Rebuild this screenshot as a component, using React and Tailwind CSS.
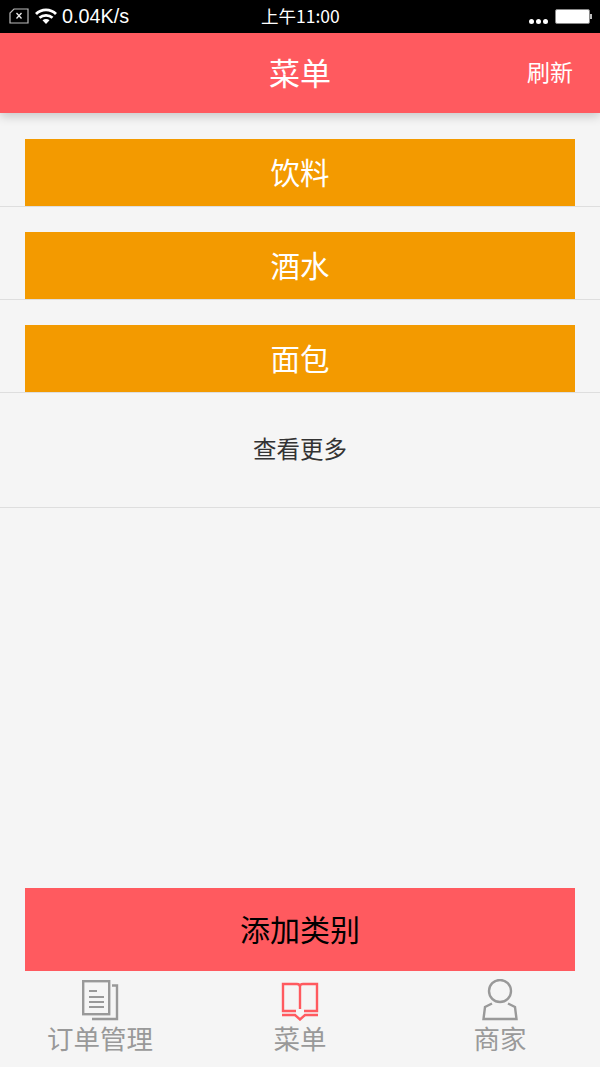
import React from 'react';

const CJK = '[font-family:"Noto_Sans_CJK_SC","Liberation_Sans",sans-serif]';

const categories = ['饮料', '酒水', '面包'];

const OrdersIcon = () => (
  <svg width="38" height="42" viewBox="0 0 38 42" fill="none" stroke="#999" strokeWidth="2.400">
    <rect x="2.200" y="2.200" width="26" height="33" />
    <path d="M31 6.500h5v33.500H11" />
    <path d="M8 12h8M8 18h15M8 23h15M8 28h15" strokeWidth="2" />
  </svg>
);

const MenuIcon = () => (
  <svg width="38" height="39" viewBox="0 0 38 39" fill="none" stroke="#ff5a5f" strokeWidth="2.400">
    <path d="M15 29H2V2h14c2 0 3 1 3 3 0-2 1-3 3-3h14v27H23" />
    <path d="M19 5v22" />
    <path d="M1 33h13l5 4.500 5-4.500h13" />
  </svg>
);

const UserIcon = () => (
  <svg width="36" height="42" viewBox="0 0 36 42" fill="none" stroke="#999" strokeWidth="2.400">
    <circle cx="18" cy="12" r="11" />
    <path d="M10 24.500l-7 3.500-1.500 12h33L33 28l-7-3.500" />
  </svg>
);

const StatusBar = () => (
  <div className="h-[33px] bg-black text-white flex items-center justify-between relative font-['Liberation_Sans',sans-serif]">
    <div className="flex items-center pl-[9px]">
      <svg width="20" height="16" viewBox="0 0 20 16" fill="none" stroke="#bbb" strokeWidth="1.200">
        <path d="M5 1h14v14H1V5z" />
        <path d="M7.500 5l5 5.500M12.500 5l-5 5.500" stroke="#eee" strokeWidth="1.300" />
      </svg>
      <svg className="ml-[6px]" width="22" height="16" viewBox="0 0 22 16" fill="none" stroke="#fff" strokeWidth="2.800">
        <path d="M1 6c5.500-5.500 14.500-5.500 20 0M4.500 9.800c3.500-3.200 9.500-3.200 13 0" />
        <path d="M7.500 12.300c2-1.600 5-1.600 7 0L11 16z" fill="#fff" stroke="none" />
      </svg>
      <span className="ml-[5px] text-[19.800px] leading-none">0.04K/s</span>
    </div>
    <span className={`absolute left-[261px] top-[6px] text-[17.500px] leading-[20px] ${CJK}`}>上午11:00</span>
    <div className="flex items-center pr-[8px]">
      <div className="flex gap-[2px] mt-[9px] mr-[7px]">
        <span className="w-[5px] h-[5px] rounded-full bg-white" />
        <span className="w-[5px] h-[5px] rounded-full bg-white" />
        <span className="w-[5px] h-[5px] rounded-full bg-white" />
      </div>
      <div className="w-[35px] h-[15px] bg-white border border-[#888] rounded-[2px]" />
      <div className="w-[2px] h-[5px] bg-[#bbb]" />
    </div>
  </div>
);

const App = () => {
  return (
    <div className={`w-[600px] h-[1067px] bg-[#f5f5f5] flex flex-col overflow-hidden ${CJK}`}>
      <StatusBar />

      <header className="h-[80px] bg-[#ff5a5f] text-white flex items-center justify-center relative shadow-[0_3px_10px_rgba(0,0,0,0.2)] z-10">
        <h1 className="text-[31px] leading-none font-normal pb-[4px]">菜单</h1>
        <span className="absolute right-[27px] top-[24px] text-[23px] leading-[29px]">刷新</span>
      </header>

      <div className="flex flex-col pt-[1px]">
        {categories.map(name => (
          <div key={name} className="pt-[25px] border-b border-[#dedede]">
            <div className="mx-[25px] h-[67px] bg-[#f39a00] text-white text-[29.500px] flex items-center justify-center pb-[2px]">
              {name}
            </div>
          </div>
        ))}
        <div className="h-[115px] border-b border-[#dedede] flex items-center justify-center text-[23.500px] text-[#333] pb-[2px]">
          查看更多
        </div>
      </div>

      <div className="flex-1" />

      <button className="mx-[25px] h-[83px] bg-[#ff5a5f] text-black text-[30px] flex items-center justify-center pb-[3px]">
        添加类别
      </button>

      <nav className="h-[96px] grid grid-cols-3 text-[#999] text-[26.500px] pt-[8px]">
        <div className="flex flex-col items-center">
          <OrdersIcon />
          <span className="leading-[34px]">订单管理</span>
        </div>
        <div className="flex flex-col items-center">
          <div className="h-[42px] pt-[3px]">
            <MenuIcon />
          </div>
          <span className="leading-[34px]">菜单</span>
        </div>
        <div className="flex flex-col items-center">
          <UserIcon />
          <span className="leading-[34px]">商家</span>
        </div>
      </nav>
    </div>
  );
};

export default App;
